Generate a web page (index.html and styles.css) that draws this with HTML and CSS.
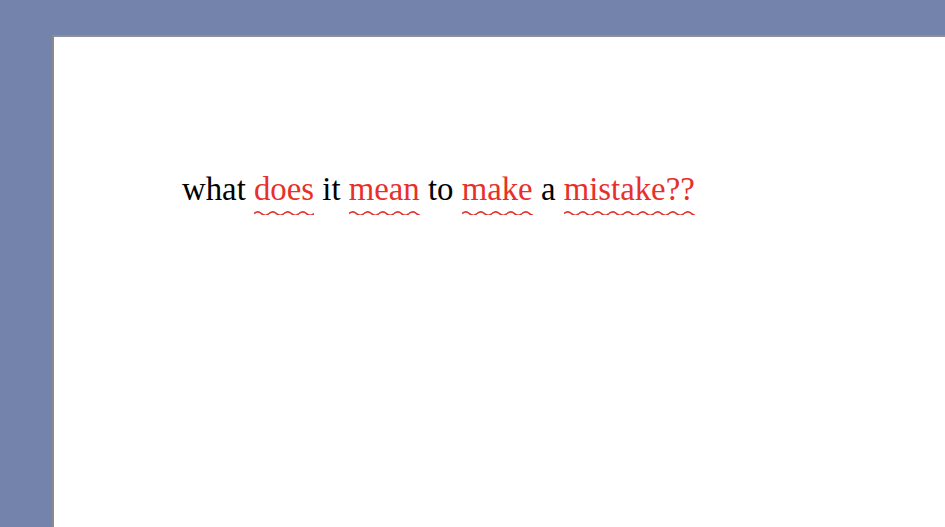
FILE: index.html
```html
<!DOCTYPE html>
<html>
<head>
<meta charset="utf-8">
<link rel="stylesheet" href="styles.css">
</head>
<body>
<div class="desk">
  <div class="page">
    <p class="line">what <span class="err">does</span> it <span class="err">mean</span> to <span class="err">make</span> a <span class="err">mistake??</span></p>
  </div>
</div>
</body>
</html>
```
FILE: styles.css
```css
html, body {
  margin: 0;
  padding: 0;
  height: 100%;
}
body {
  background: #7383ab;
  overflow: hidden;
}
.desk {
  height: 100%;
  box-sizing: border-box;
  padding: 35px 0 0 52px;
  display: flex;
}
.page {
  flex: 1;
  background: #ffffff;
  border-left: 2px solid #8a8a8e;
  border-top: 2px solid #8f9097;
  padding: 132px 0 0 128px;
}
.line {
  margin: 0;
  font-family: "Liberation Serif", "Times New Roman", serif;
  font-size: 32.8px;
  line-height: 40px;
  color: #000;
}
.err {
  color: #e8302a;
  padding-bottom: 8px;
  background-image: url("data:image/svg+xml,%3Csvg xmlns='http://www.w3.org/2000/svg' width='15' height='5'%3E%3Cpath d='M0 3.6 Q3.75 0.2 7.5 3.6 T15 3.6' fill='none' stroke='%23e3302a' stroke-width='1.5'/%3E%3C/svg%3E");
  background-repeat: repeat-x;
  background-position: left bottom;
  background-size: 15px 5px;
}
```
